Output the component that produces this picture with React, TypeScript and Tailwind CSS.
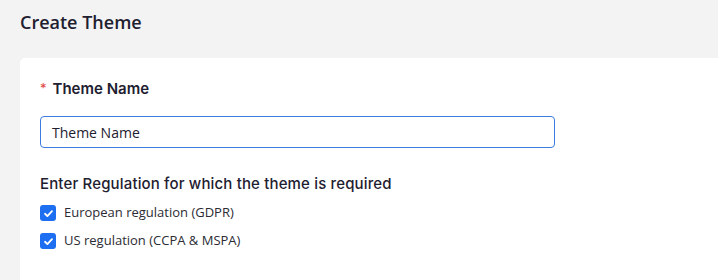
import React from "react";

function Check({ label }: { label: string }) {
  return (
    <label className="flex items-center gap-[8px] h-[28px]">
      <span className="w-[16px] h-[16px] rounded-[3px] bg-[#1d6ef0] flex items-center justify-center">
        <svg width="11" height="11" viewBox="0 0 12 12" fill="none">
          <path d="M2.2 6.3 L4.8 8.8 L9.8 3.4" stroke="white" strokeWidth="2" strokeLinecap="round" strokeLinejoin="round" />
        </svg>
      </span>
      <span className="text-[13px] text-[#2b2b33] font-['Open_Sans',sans-serif]">{label}</span>
    </label>
  );
}

export default function App() {
  return (
    <div className="w-[718px] h-[280px] bg-[#f3f3f3] overflow-hidden font-['Open_Sans',sans-serif]">
      <div className="pl-[20px] pt-[10px] h-[58px]">
        <h1 className="text-[18px] leading-[24px] font-semibold text-[#1e2030]">Create Theme</h1>
      </div>
      <div className="ml-[20px] bg-white rounded-tl-[5px] h-[230px] pl-[20px] pt-[20px]">
        <div className="flex items-center h-[22px] font-['Inter',sans-serif] text-[15px] font-semibold text-[#1e2030]">
          <span className="text-[#e0443c] text-[13px] mr-[6px] font-normal">*</span>
          <span>Theme Name</span>
        </div>
        <div className="mt-[16px] w-[515px] h-[32px] border border-[#3c7be0] rounded-[4px] flex items-center pl-[11px] text-[14px] text-[#1e2030]">
          Theme Name
        </div>
        <div className="mt-[25px] h-[22px] flex items-center font-['Inter',sans-serif] text-[15px] tracking-[0.15px] font-medium text-[#1e2030]">
          Enter Regulation for which the theme is required
        </div>
        <div className="mt-[4px] flex flex-col">
          <Check label="European regulation (GDPR)" />
          <Check label="US regulation (CCPA & MSPA)" />
        </div>
      </div>
    </div>
  );
}
